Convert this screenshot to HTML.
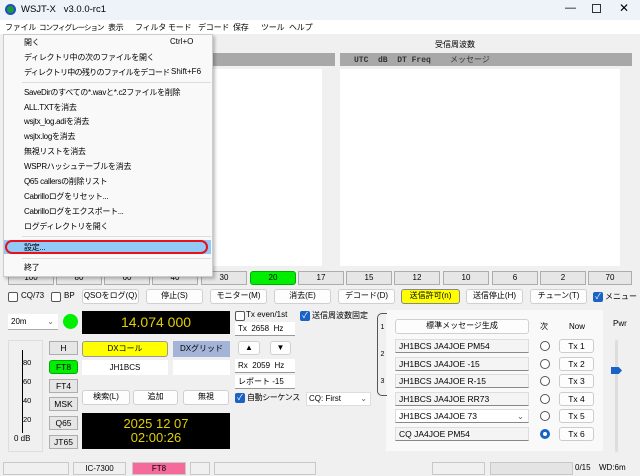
<!DOCTYPE html>
<html><head><meta charset="utf-8"><style>
*{box-sizing:border-box;margin:0;padding:0}
body{width:640px;height:476px;overflow:hidden;background:#f0f0f0;font-family:"Liberation Sans","Noto Sans CJK JP",sans-serif;font-size:8px;color:#000;position:relative;white-space:nowrap}
.a{position:absolute}
.btn{position:absolute;background:#fdfdfd;border:1px solid #d0d0d0;border-radius:3px;text-align:center;font-size:8px;line-height:12px;overflow:hidden}
.band{position:absolute;top:271px;height:14px;width:46px;background:#e6e6e6;border:1px solid #adadad;text-align:center;font-size:8px;line-height:12px}
.cb{position:absolute;width:10px;height:10px;border:1px solid #555;border-radius:2px;background:#fff}
.cbk{position:absolute;width:10px;height:10px;border-radius:2px;background:#1a62c4;color:#fff;font-size:8px;line-height:10px;text-align:center}
.mi{position:absolute;left:24px;font-size:8px;letter-spacing:-0.3px}
.m{position:absolute;top:22px;font-size:8px;letter-spacing:-0.2px}
.sp{position:absolute;background:#fff;border-bottom:1px solid #999;font-size:8px;line-height:13px;padding-left:3px}
.msg{position:absolute;left:395px;width:134px;height:14px;background:#f4f4f4;border:1px solid #ddd;border-bottom:1px solid #888;font-size:8.5px;line-height:12px;padding-left:3px}
.rad{position:absolute;left:540px;width:10px;height:10px;border:1px solid #555;border-radius:50%;background:#fff}
.tx{position:absolute;left:559px;width:35px;height:14px;background:#fdfdfd;border:1px solid #ccc;border-radius:3px;text-align:center;font-size:8.5px;line-height:12px}
.lb{position:absolute;left:49px;width:29px;height:14px;background:#e6e6e6;border:1px solid #adadad;text-align:center;font-size:8.5px;line-height:12px}
.st{position:absolute;top:462px;height:13px;border:1px solid #c8c8c8;font-size:8px;line-height:11px;text-align:center}
</style></head><body>
<div class="a" style="left:0;top:0;width:640px;height:20px;background:#eef3f9"></div>
<div class="a" style="left:5px;top:4px;width:11px;height:11px;border-radius:50%;background:#1a9a3a;border:2px solid #2050c0"></div>
<div class="a" style="left:21px;top:4px;font-size:9.5px">WSJT-X&nbsp;&nbsp; v3.0.0-rc1</div>
<div class="a" style="left:565px;top:2px;font-size:11px">&#8212;</div>
<div class="a" style="left:592px;top:4px;width:9px;height:9px;border:1px solid #333"></div>
<div class="a" style="left:619px;top:1px;font-size:12px">&#x2715;</div>
<div class="a" style="left:0;top:20px;width:640px;height:14px;background:#fff"></div>
<div class="m" style="left:5px">ファイル</div><div class="m" style="left:39px;letter-spacing:-1px;font-size:7.5px">コンフィグレーション</div><div class="m" style="left:108px">表示</div><div class="m" style="left:135px">フィルタ</div><div class="m" style="left:168px">モード</div><div class="m" style="left:198px">デコード</div><div class="m" style="left:233px">保存</div><div class="m" style="left:261px">ツール</div><div class="m" style="left:289px">ヘルプ</div>
<div class="a" style="left:435px;top:39px;font-size:8px">受信周波数</div>
<div class="a" style="left:5px;top:53px;width:330px;height:13px;background:#a8a8a8"></div>
<div class="a" style="left:340px;top:53px;width:292px;height:13px;background:#a8a8a8;font-family:'Liberation Mono',monospace;font-size:8px;line-height:13px;font-weight:bold;color:#333;padding-left:14px;white-space:pre">UTC  dB  DT Freq    <span style="font-family:'Noto Sans CJK JP';font-weight:normal">メッセージ</span></div>
<div class="a" style="left:5px;top:69px;width:330px;height:197px;background:#fff"></div>
<div class="a" style="left:340px;top:69px;width:292px;height:197px;background:#fff"></div>
<div class="a" style="left:620px;top:69px;width:12px;height:197px;background:#f0f0f0"></div>
<div class="a" style="left:322px;top:69px;width:13px;height:197px;background:#f0f0f0"></div>
<div class="band" style="left:8px">100</div><div class="band" style="left:56px">80</div><div class="band" style="left:104px">60</div><div class="band" style="left:152px">40</div><div class="band" style="left:201px">30</div>
<div class="band" style="left:250px;background:#00ee00;border-color:#0a0;border-radius:3px">20</div>
<div class="band" style="left:298px">17</div><div class="band" style="left:346px">15</div><div class="band" style="left:394px">12</div><div class="band" style="left:443px">10</div><div class="band" style="left:492px">6</div><div class="band" style="left:540px">2</div><div class="band" style="left:588px;width:44px">70</div>
<div class="cb" style="left:8px;top:292px"></div><div class="a" style="left:21px;top:291px">CQ/73</div>
<div class="cb" style="left:51px;top:292px"></div><div class="a" style="left:64px;top:291px">BP</div>
<div class="btn" style="left:82px;top:289px;width:57px;height:15px">QSOをログ(Q)</div>
<div class="btn" style="left:146px;top:289px;width:57px;height:15px">停止(S)</div>
<div class="btn" style="left:210px;top:289px;width:57px;height:15px">モニター(M)</div>
<div class="btn" style="left:274px;top:289px;width:57px;height:15px">消去(E)</div>
<div class="btn" style="left:338px;top:289px;width:57px;height:15px">デコード(D)</div>
<div class="btn" style="left:401px;top:289px;width:59px;height:15px;background:#ffff00;border-color:#888">送信許可(n)</div>
<div class="btn" style="left:466px;top:289px;width:57px;height:15px">送信停止(H)</div>
<div class="btn" style="left:530px;top:289px;width:57px;height:15px">チューン(T)</div>
<div class="cbk" style="left:593px;top:292px">✓</div><div class="a" style="left:605px;top:291px">メニュー</div>
<div class="a" style="left:8px;top:314px;width:50px;height:16px;background:#fff;border-bottom:1px solid #aaa;font-size:8px;line-height:15px;padding-left:3px">20m<span style="position:absolute;right:4px;color:#666">&#8964;</span></div>
<div class="a" style="left:63px;top:314px;width:15px;height:15px;border-radius:50%;background:#00ee00"></div>
<div class="a" style="left:82px;top:311px;width:148px;height:23px;background:#000;color:#e0d000;font-size:14px;text-align:center;line-height:23px">14.074 000</div>
<div class="cb" style="left:235px;top:311px"></div><div class="a" style="left:246px;top:310px">Tx even/1st</div>
<div class="cbk" style="left:300px;top:311px">✓</div><div class="a" style="left:312px;top:310px">送信周波数固定</div>
<div class="sp" style="left:235px;top:322px;width:60px;height:14px">Tx&nbsp; 2658&nbsp; Hz</div>
<div class="a" style="left:8px;top:340px;width:35px;height:112px;border:1px solid #ddd"></div>
<div class="a" style="left:22px;top:350px;width:1px;height:83px;background:#000"></div>
<div class="a" style="left:23px;top:353px;font-size:7.5px;line-height:19px;white-space:normal">80<br>60<br>40<br>20<br>0</div>
<div class="a" style="left:14px;top:434px;font-size:8px;background:#f0f0f0">0 dB</div>
<div class="lb" style="top:341px">H</div>
<div class="lb" style="top:360px;background:#00ee00;border-color:#0a0;border-radius:3px">FT8</div>
<div class="lb" style="top:379px">FT4</div>
<div class="lb" style="top:397px">MSK</div>
<div class="lb" style="top:416px">Q65</div>
<div class="lb" style="top:435px">JT65</div>
<div class="btn" style="left:82px;top:341px;width:86px;height:16px;background:#ffff00;border-color:#999;border-radius:3px;line-height:14px">DXコール</div>
<div class="a" style="left:173px;top:341px;width:57px;height:16px;background:#a4b4d8;text-align:center;line-height:16px">DXグリッド</div>
<div class="a" style="left:82px;top:360px;width:86px;height:15px;background:#fff;text-align:center;line-height:15px">JH1BCS</div>
<div class="a" style="left:173px;top:360px;width:57px;height:15px;background:#fff"></div>
<div class="btn" style="left:238px;top:341px;width:22px;height:14px">&#9650;</div>
<div class="btn" style="left:270px;top:341px;width:21px;height:14px">&#9660;</div>
<div class="sp" style="left:235px;top:359px;width:60px;height:14px">Rx&nbsp; 2059&nbsp; Hz</div>
<div class="sp" style="left:235px;top:375px;width:60px;height:14px">レポート -15</div>
<div class="btn" style="left:82px;top:390px;width:48px;height:15px">検索(L)</div>
<div class="btn" style="left:133px;top:390px;width:45px;height:15px">追加</div>
<div class="btn" style="left:183px;top:390px;width:46px;height:15px">無視</div>
<div class="cbk" style="left:235px;top:393px">✓</div><div class="a" style="left:247px;top:392px;letter-spacing:-0.4px">自動シーケンス</div>
<div class="a" style="left:306px;top:392px;width:65px;height:14px;background:#fff;border:1px solid #ddd;font-size:8px;line-height:12px;padding-left:2px">CQ: First<span style="position:absolute;right:3px;color:#666">&#8964;</span></div>
<div class="a" style="left:82px;top:413px;width:148px;height:36px;background:#000;color:#e0d000;font-size:13px;text-align:center;line-height:14px;padding-top:4px;white-space:normal">2025 12 07<br>02:00:26</div>
<div class="a" style="left:386px;top:310px;width:217px;height:141px;background:#f9f9f9"></div>
<div class="a" style="left:377px;top:313px;width:10px;height:83px;border:1px solid #555;border-right:none;border-radius:5px 0 0 5px;font-size:7px;line-height:27px;text-align:center;white-space:normal">1<br>2<br>3</div>
<div class="btn" style="left:395px;top:319px;width:134px;height:15px">標準メッセージ生成</div>
<div class="a" style="left:540px;top:321px">次</div><div class="a" style="left:569px;top:322px">Now</div>
<div class="msg" style="top:339px">JH1BCS JA4JOE PM54</div>
<div class="msg" style="top:357px">JH1BCS JA4JOE -15</div>
<div class="msg" style="top:374px">JH1BCS JA4JOE R-15</div>
<div class="msg" style="top:392px">JH1BCS JA4JOE RR73</div>
<div class="msg" style="top:409px;background:#fff">JH1BCS JA4JOE 73<span style="position:absolute;right:4px;color:#666">&#8964;</span></div>
<div class="msg" style="top:427px">CQ JA4JOE PM54</div>
<div class="rad" style="top:341px"></div><div class="rad" style="top:359px"></div><div class="rad" style="top:376px"></div><div class="rad" style="top:394px"></div><div class="rad" style="top:411px"></div>
<div class="rad" style="top:429px;border:3px solid #1a62c4"></div>
<div class="tx" style="top:339px">Tx 1</div><div class="tx" style="top:357px">Tx 2</div><div class="tx" style="top:374px">Tx 3</div><div class="tx" style="top:392px">Tx 4</div><div class="tx" style="top:409px">Tx 5</div><div class="tx" style="top:427px">Tx 6</div>
<div class="a" style="left:613px;top:319px;font-size:8px">Pwr</div>
<div class="a" style="left:615px;top:340px;width:3px;height:112px;background:#ddd;border-radius:2px"></div>
<div class="a" style="left:611px;top:367px;width:11px;height:7px;background:#1a62c4;clip-path:polygon(0 0,70% 0,100% 50%,70% 100%,0 100%)"></div>
<div class="st" style="left:3px;width:66px"></div>
<div class="st" style="left:73px;width:53px">IC-7300</div>
<div class="st" style="left:132px;width:54px;background:#f56a9a">FT8</div>
<div class="st" style="left:190px;width:20px"></div>
<div class="st" style="left:214px;width:102px"></div>
<div class="st" style="left:432px;width:53px"></div>
<div class="st" style="left:490px;width:83px;background:#e4e4e4"></div>
<div class="a" style="left:575px;top:463px;font-size:8px">0/15</div>
<div class="a" style="left:599px;top:463px;font-size:8px">WD:6m</div>
<div class="a" style="left:3px;top:34px;width:210px;height:243px;background:#f9f9f9;border:1px solid #ccc;box-shadow:2px 2px 3px rgba(0,0,0,.25)"></div>
<div class="mi" style="top:37px">開く</div><div class="a" style="left:170px;top:37px;font-size:8px">Ctrl+O</div>
<div class="mi" style="top:52px">ディレクトリ中の次のファイルを開く</div>
<div class="mi" style="top:67px;letter-spacing:-0.7px">ディレクトリ中の残りのファイルをデコード</div><div class="a" style="left:171px;top:67px;font-size:8px">Shift+F6</div>
<div class="a" style="left:22px;top:82px;width:189px;height:1px;background:#ddd"></div>
<div class="mi" style="top:87px">SaveDirのすべての*.wavと*.c2ファイルを削除</div>
<div class="mi" style="top:102px">ALL.TXTを消去</div>
<div class="mi" style="top:116px">wsjtx_log.adiを消去</div>
<div class="mi" style="top:131px">wsjtx.logを消去</div>
<div class="mi" style="top:146px">無視リストを消去</div>
<div class="mi" style="top:161px">WSPRハッシュテーブルを消去</div>
<div class="mi" style="top:176px">Q65 callersの削除リスト</div>
<div class="mi" style="top:191px">Cabrilloログをリセット...</div>
<div class="mi" style="top:206px">Cabrilloログをエクスポート...</div>
<div class="mi" style="top:221px">ログディレクトリを開く</div>
<div class="a" style="left:22px;top:236px;width:189px;height:1px;background:#ddd"></div>
<div class="a" style="left:4px;top:240px;width:207px;height:14px;background:#91c9f7"></div>
<div class="a" style="left:5px;top:240px;width:203px;height:14px;border:2.5px solid #e8101a;border-radius:7px"></div>
<div class="mi" style="top:242px">設定...</div>
<div class="a" style="left:22px;top:258px;width:189px;height:1px;background:#ddd"></div>
<div class="mi" style="top:262px">終了</div>
</body></html>
